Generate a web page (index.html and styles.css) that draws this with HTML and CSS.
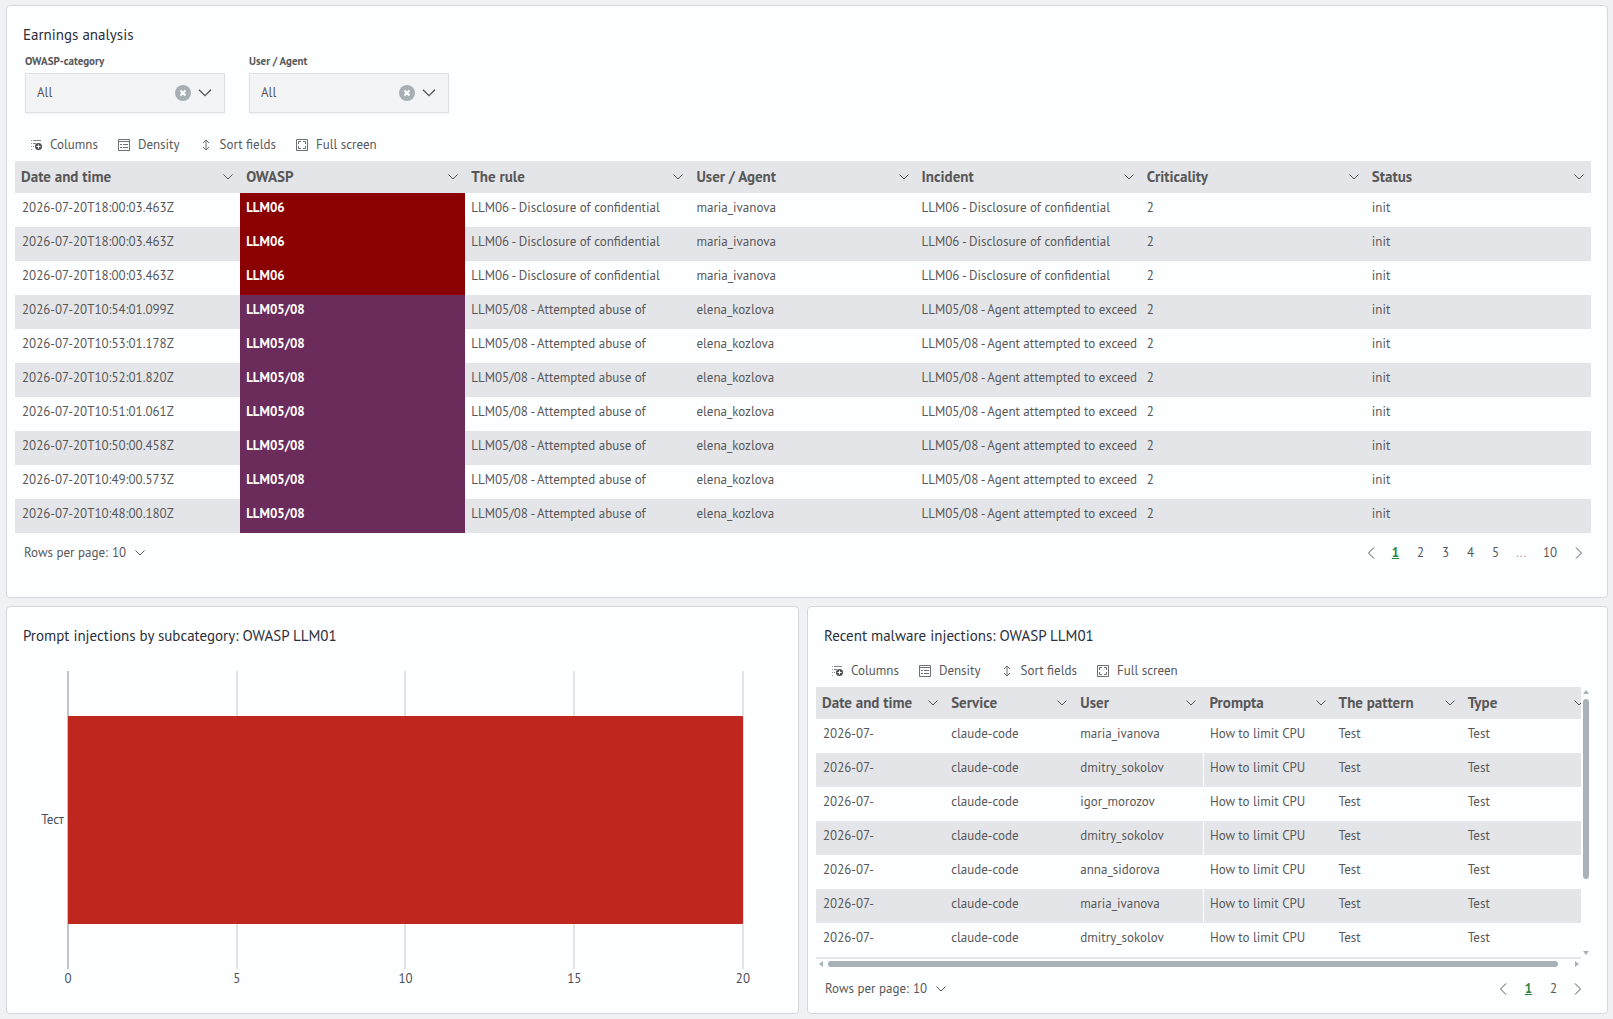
FILE: index.html
```html
<!DOCTYPE html>
<html lang="en">
<head>
    <meta charset="UTF-8">
    <meta name="viewport" content="width=device-width, initial-scale=1.0">
    <title>Earnings analysis</title>
    <link rel="stylesheet" href="styles.css">
</head>
<body>
    <svg class="sprite" aria-hidden="true">
        <symbol id="i-columns" viewBox="0 0 12 12">
            <path d="M1 1.5h1M1 4.5h1M1 7.5h1M1 10.500h1" stroke="#9a9a9a"/>
            <path d="M3 1.5h8M3 4.500h3M3 7.500h1" stroke="#888"/>
            <circle cx="8.500" cy="7.500" r="3.500" fill="#505050"/>
            <path d="M8.500 5.500v4M6.500 7.500h4" stroke="#fff"/>
        </symbol>
        <symbol id="i-density" viewBox="0 0 12 12">
            <path d="M.5.5h11v11H.5zM.5 2.5h11" stroke="#707070" fill="none"/>
            <path d="M2 5.500h2M5 5.500h5M2 8.500h2M5 8.500h5" stroke="#707070"/>
        </symbol>
        <symbol id="i-sort" viewBox="0 0 12 12">
            <path d="M6 1v10M3 4l3-3 3 3M3 8l3 3 3-3" stroke="#6c6c6c" fill="none"/>
        </symbol>
        <symbol id="i-full" viewBox="0 0 12 12">
            <path d="M.5.5h11v11H.5z" stroke="#707070" fill="none"/>
            <path d="M2.500 5V2.500H5M7 2.500h2.500V5M9.500 7v2.500H7M5 9.500H2.500V7" stroke="#707070" fill="none"/>
        </symbol>
        <symbol id="i-down" viewBox="0 0 12 12">
            <path d="M1.500 3.500L6 8l4.500-4.500" stroke="#555" fill="none"/>
        </symbol>
        <symbol id="i-prev" viewBox="0 0 12 12">
            <path d="M9 .5L3.500 6 9 11.500" stroke="#555" fill="none"/>
        </symbol>
        <symbol id="i-next" viewBox="0 0 12 12">
            <path d="M3 .5L8.500 6 3 11.500" stroke="#555" fill="none"/>
        </symbol>
    </svg>

    <main class="dashboard">
        <section class="card">
            <h2>Earnings analysis</h2>
            <div class="filters">
                <div class="filter">
                    <label for="category">OWASP-category</label>
                    <div class="select-box">
                        <select id="category"><option>All</option></select>
                        <button class="clear" aria-label="Clear category"><svg viewBox="0 0 16 16"><path d="M5.500 5.500l5 5M10.500 5.500l-5 5"/></svg></button>
                        <svg class="arrow"><use href="#i-down"/></svg>
                    </div>
                </div>
                <div class="filter">
                    <label for="agent">User / Agent</label>
                    <div class="select-box">
                        <select id="agent"><option>All</option></select>
                        <button class="clear" aria-label="Clear user"><svg viewBox="0 0 16 16"><path d="M5.500 5.500l5 5M10.500 5.500l-5 5"/></svg></button>
                        <svg class="arrow"><use href="#i-down"/></svg>
                    </div>
                </div>
            </div>

            <div class="toolbar">
                <button><svg><use href="#i-columns"/></svg>Columns</button>
                <button><svg><use href="#i-density"/></svg>Density</button>
                <button><svg><use href="#i-sort"/></svg>Sort fields</button>
                <button><svg><use href="#i-full"/></svg>Full screen</button>
            </div>

            <table id="incidents">
                <thead></thead>
                <tbody></tbody>
            </table>

            <div class="pager">
                <div class="page-size">
                    <label for="size1">Rows per page:</label>
                    <select id="size1"><option>10</option></select>
                    <svg><use href="#i-down"/></svg>
                </div>
                <nav class="pages" aria-label="Incident pages">
                    <a href="#" aria-label="Previous"><svg><use href="#i-prev"/></svg></a>
                    <a href="#" class="current">1</a>
                    <a href="#">2</a>
                    <a href="#">3</a>
                    <a href="#">4</a>
                    <a href="#">5</a>
                    <span>...</span>
                    <a href="#" class="wide">10</a>
                    <a href="#" aria-label="Next"><svg><use href="#i-next"/></svg></a>
                </nav>
            </div>
        </section>

        <div class="bottom">
            <section class="card">
                <h2>Prompt injections by subcategory: OWASP LLM01</h2>
                <div class="chart">
                    <span class="y-label">Тест</span>
                    <div class="plot">
                        <i class="axis"></i><i></i><i></i><i></i><i></i>
                        <div class="bar" style="width: 100%"></div>
                    </div>
                    <div class="x-labels">
                        <span>0</span><span>5</span><span>10</span><span>15</span><span>20</span>
                    </div>
                </div>
            </section>

            <section class="card">
                <h2>Recent malware injections: OWASP LLM01</h2>
                <div class="toolbar">
                    <button><svg><use href="#i-columns"/></svg>Columns</button>
                    <button><svg><use href="#i-density"/></svg>Density</button>
                    <button><svg><use href="#i-sort"/></svg>Sort fields</button>
                    <button><svg><use href="#i-full"/></svg>Full screen</button>
                </div>
                <div class="scroller">
                    <div class="viewport">
                        <table id="injections">
                            <thead></thead>
                            <tbody></tbody>
                        </table>
                    </div>
                    <div class="scroll-y"><div class="thumb"></div></div>
                    <div class="scroll-x"><div class="thumb"></div></div>
                </div>
                <div class="pager">
                    <div class="page-size">
                        <label for="size2">Rows per page:</label>
                        <select id="size2"><option>10</option></select>
                        <svg><use href="#i-down"/></svg>
                    </div>
                    <nav class="pages" aria-label="Injection pages">
                        <a href="#" aria-label="Previous"><svg><use href="#i-prev"/></svg></a>
                        <a href="#" class="current">1</a>
                        <a href="#">2</a>
                        <a href="#" aria-label="Next"><svg><use href="#i-next"/></svg></a>
                    </nav>
                </div>
            </section>
        </div>
    </main>

    <script>
        const confidential = ['18:00:03.463', '18:00:03.463', '18:00:03.463'];
        const abuse = ['10:54:01.099', '10:53:01.178', '10:52:01.820', '10:51:01.061', '10:50:00.458', '10:49:00.573', '10:48:00.180'];

        const incidents = [
            ...confidential.map(t => [`2026-07-20T${t}Z`, 'LLM06', 'LLM06 - Disclosure of confidential', 'maria_ivanova', 'LLM06 - Disclosure of confidential', '2', 'init']),
            ...abuse.map(t => [`2026-07-20T${t}Z`, 'LLM05/08', 'LLM05/08 - Attempted abuse of', 'elena_kozlova', 'LLM05/08 - Agent attempted to exceed', '2', 'init'])
        ];

        const users = ['maria_ivanova', 'dmitry_sokolov', 'igor_morozov', 'dmitry_sokolov', 'anna_sidorova', 'maria_ivanova', 'dmitry_sokolov'];
        const injections = users.map(u => ['2026-07-', 'claude-code', u, 'How to limit CPU', 'Test', 'Test']);

        const cellClass = { 'LLM06': 'leak', 'LLM05/08': 'abuse' };

        function fillTable(id, heads, rows) {
            const table = document.getElementById(id);
            table.tHead.innerHTML = '<tr>' + heads.map(h =>
                `<th><div><span>${h}</span><svg><use href="#i-down"/></svg></div></th>`).join('') + '</tr>';
            table.tBodies[0].innerHTML = rows.map(row =>
                '<tr>' + row.map(c => `<td class="${cellClass[c] || ''}">${c}</td>`).join('') + '</tr>').join('');
        }

        fillTable('incidents', ['Date and time', 'OWASP', 'The rule', 'User / Agent', 'Incident', 'Criticality', 'Status'], incidents);
        fillTable('injections', ['Date and time', 'Service', 'User', 'Prompta', 'The pattern', 'Type'], injections);
    </script>
</body>
</html>
```
FILE: styles.css
```css
* {
    box-sizing: border-box;
}

body {
    margin: 0;
    background: #f0f1f4;
    color: #585858;
    font-family: "PT Sans", "Noto Sans CJK SC", sans-serif;
    font-size: 13px;
    line-height: 20px;
}

button, select {
    font: inherit;
    color: inherit;
    background: none;
    border: none;
    padding: 0;
    cursor: pointer;
}

select {
    appearance: none;
    outline: none;
}

svg {
    display: block;
    width: 12px;
    height: 12px;
    flex: none;
}

.sprite {
    position: absolute;
    width: 0;
    height: 0;
}

.dashboard {
    display: flex;
    flex-direction: column;
    gap: 8px;
    min-height: 100vh;
    padding: 5px 5px 5px 6px;
}

.card {
    display: flex;
    flex-direction: column;
    min-width: 0;
    padding: 16px 16px 4px 8px;
    background: #fdfeff;
    border: 1px solid #d5d7db;
    border-radius: 4px;
}

.dashboard > .card {
    padding-bottom: 24px;
}

h2 {
    margin: 0 8px;
    font-size: 15px;
    font-weight: 400;
    line-height: 26px;
    color: #2b2f3a;
}

/* filters */

.filters {
    display: flex;
    gap: 24px;
    padding: 4px 10px 0;
}

.filter {
    width: 200px;
}

.filter label {
    display: block;
    height: 21px;
    font-size: 11px;
    font-weight: 700;
    line-height: 18px;
}

.select-box {
    position: relative;
    height: 40px;
    background: #f3f4f6;
    border: 1px solid #dde0e4;
    box-shadow: 0 1px 2px rgba(0, 0, 0, 0.06);
}

.select-box select {
    width: 100%;
    height: 100%;
    padding: 0 60px 0 11px;
}

.clear {
    position: absolute;
    top: 11px;
    right: 33px;
    width: 16px;
    height: 16px;
    border-radius: 50%;
    background: #a7afb5;
}

.clear svg {
    width: 16px;
    height: 16px;
    stroke: #fff;
    stroke-width: 2;
}

.arrow {
    position: absolute;
    top: 11px;
    right: 11px;
    width: 16px;
    height: 16px;
    pointer-events: none;
}

/* toolbar */

.toolbar {
    display: flex;
    gap: 20px;
    padding: 12px 15px 6px;
}

.filters + .toolbar {
    padding-top: 22px;
}

.toolbar button {
    display: flex;
    align-items: center;
    gap: 8px;
    height: 20px;
}

/* tables */

table {
    width: 100%;
    table-layout: fixed;
    border-collapse: collapse;
}

th {
    height: 32px;
    padding: 0 6px;
    background: #e4e5e9;
    font-size: 15px;
    text-align: left;
}

th div {
    display: flex;
    align-items: center;
    justify-content: space-between;
}

td {
    height: 34px;
    padding: 0 6px 4px;
    white-space: nowrap;
}

td:first-child {
    padding-left: 7px;
}

tbody tr:nth-child(even) {
    background: #e4e5e9;
}

td.leak, td.abuse {
    color: #fff;
    font-weight: 700;
}

td.leak {
    background: #8b0000;
}

td.abuse {
    background: #6b2c5c;
}

.scroller {
    display: grid;
    grid-template-columns: minmax(0, 1fr) 10px;
    grid-template-rows: auto 10px;
}

.viewport {
    overflow: hidden;
    border-bottom: 2px solid #e4e5e9;
}

.viewport table {
    width: calc(100% + 10px);
}

.viewport tbody td:nth-child(4) {
    border-left: 1px solid #fdfeff;
}

.thumb {
    flex: none;
    background: #a8b1b8;
    border-radius: 3px;
}

.scroll-y, .scroll-x {
    display: flex;
    justify-content: space-between;
    align-items: center;
}

.scroll-y {
    flex-direction: column;
    padding: 3px 0 4px;
}

.scroll-x {
    padding: 0 2px 0 3px;
}

.scroll-y .thumb {
    width: 6px;
    height: 68%;
    margin: 5px 0 auto;
}

.scroll-x .thumb {
    height: 6px;
    width: 96%;
    margin: 0 auto 0 5px;
}

.scroll-y::before, .scroll-y::after,
.scroll-x::before, .scroll-x::after {
    content: "";
    border: 3px solid transparent;
}

.scroll-y::before {
    border-top: none;
    border-bottom: 4px solid #a8b1b8;
}

.scroll-y::after {
    border-bottom: none;
    border-top: 4px solid #a8b1b8;
}

.scroll-x::before {
    border-left: none;
    border-right: 4px solid #a8b1b8;
}

.scroll-x::after {
    border-right: none;
    border-left: 4px solid #a8b1b8;
}

/* pager */

.pager {
    display: flex;
    justify-content: space-between;
    align-items: center;
    height: 40px;
    padding-left: 9px;
}

.page-size {
    display: flex;
    align-items: center;
    gap: 4px;
}

.page-size svg {
    margin-left: 3px;
}

.pages {
    display: flex;
}

.pages a, .pages span {
    display: flex;
    align-items: center;
    justify-content: center;
    width: 25px;
    height: 20px;
    color: inherit;
    text-decoration: none;
}

.pages span {
    width: 26px;
    color: #a0a0a0;
}

.pages .wide {
    width: 32px;
}

.pages .current {
    color: #2e8540;
    font-weight: 700;
    text-decoration: underline;
}

/* bottom row */

.bottom {
    display: grid;
    grid-template-columns: 99fr 100fr;
    gap: 8px;
    flex: 1;
}

.chart {
    flex: 1;
    display: grid;
    grid-template-columns: 53px 1fr;
    grid-template-rows: 1fr 20px;
    padding: 22px 39px 20px 0;
    color: #4a4f5a;
}

.y-label {
    align-self: center;
    padding-right: 4px;
    text-align: right;
}

.plot {
    position: relative;
    display: flex;
    justify-content: space-between;
}

.plot i {
    width: 2px;
    margin: 0 -1px;
    background: #e1e3e7;
}

.plot .axis {
    background: #c0c2c6;
}

.bar {
    position: absolute;
    top: 15%;
    left: 0;
    height: 70%;
    background: #bf261e;
    border-radius: 1px;
}

.x-labels {
    grid-column: 2;
    display: flex;
    justify-content: space-between;
}

.x-labels span {
    display: flex;
    justify-content: center;
    width: 0;
}
```
